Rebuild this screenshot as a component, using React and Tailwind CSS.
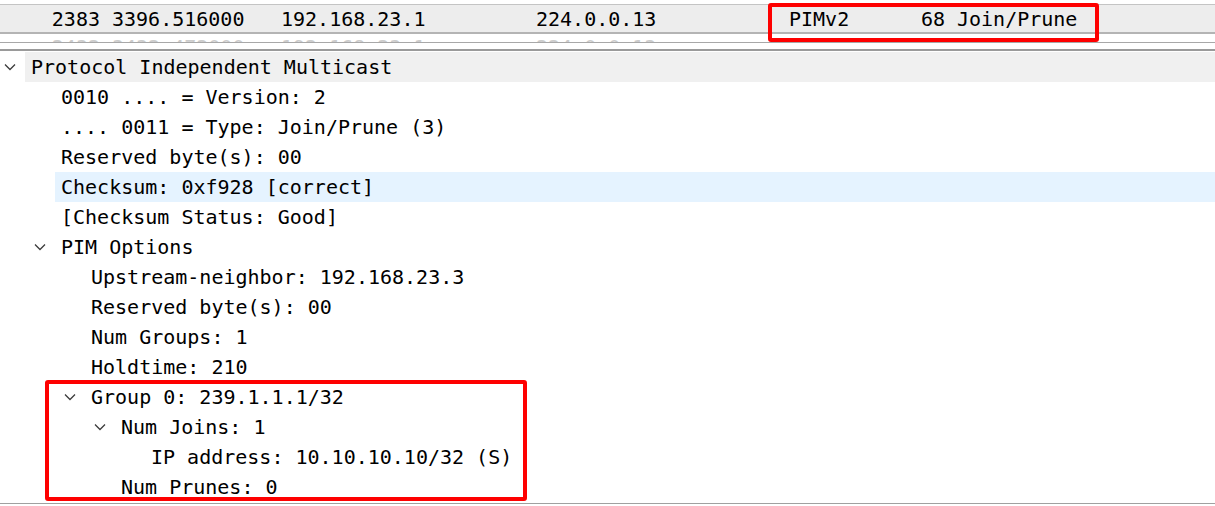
import React from "react";

const MONO = { fontFamily: '"DejaVu Sans Mono", "Liberation Mono", monospace' };

function Chevron() {
  return (
    <svg width="12" height="8" viewBox="0 0 12 8" className="block">
      <polyline points="1,1.5 6,6.5 11,1.5" fill="none" stroke="#3c3c3c" strokeWidth="1.3" />
    </svg>
  );
}

function PacketRow({ no, time, src, dst, proto, len, info, ghost }) {
  return (
    <div className={"flex items-center text-[20px] leading-none whitespace-pre " + (ghost ? "text-[#cccccc]" : "text-black")}>
      <div className="w-[100px] text-right">{no}</div>
      <div className="ml-[12px] w-[169px]">{time}</div>
      <div className="w-[255px]">{src}</div>
      <div className="w-[253px]">{dst}</div>
      <div className="w-[108px]">{proto}</div>
      <div className="w-[48px] text-right">{len}</div>
      <div className="ml-[12px]">{info}</div>
    </div>
  );
}

const rows = [
  { l: 0, t: "Protocol Independent Multicast", c: true, bg: "bg-[#f0f0f0]" },
  { l: 1, t: "0010 .... = Version: 2" },
  { l: 1, t: ".... 0011 = Type: Join/Prune (3)" },
  { l: 1, t: "Reserved byte(s): 00" },
  { l: 1, t: "Checksum: 0xf928 [correct]", bg: "bg-[#e5f3ff]" },
  { l: 1, t: "[Checksum Status: Good]" },
  { l: 1, t: "PIM Options", c: true },
  { l: 2, t: "Upstream-neighbor: 192.168.23.3" },
  { l: 2, t: "Reserved byte(s): 00" },
  { l: 2, t: "Num Groups: 1" },
  { l: 2, t: "Holdtime: 210" },
  { l: 2, t: "Group 0: 239.1.1.1/32", c: true },
  { l: 3, t: "Num Joins: 1", c: true },
  { l: 4, t: "IP address: 10.10.10.10/32 (S)" },
  { l: 3, t: "Num Prunes: 0" },
];

const indentCls = ["w-0", "w-[30px]", "w-[60px]", "w-[90px]", "w-[120px]"];

export default function App() {
  return (
    <div className="w-[1215px] h-[506px] bg-white overflow-hidden" style={MONO}>
      {/* Packet list */}
      <div className="relative">
        <div className="h-[4px] bg-white" />
        <div className="h-px bg-[#c4c4c4]" />
        <div className="h-[27px] bg-[#ededed] flex items-center">
          <PacketRow no="2383" time="3396.516000" src="192.168.23.1" dst="224.0.0.13" proto="PIMv2" len="68" info="Join/Prune" />
        </div>
        <div className="h-[2px] bg-[#b4b4b4]" />
        <div className="h-[8px] overflow-hidden bg-white">
          <div className="pt-[3px]">
            <PacketRow ghost no="2432" time="3432.472000" src="192.168.23.1" dst="224.0.0.13" proto="PIMv2" len="68" info="Join/Prune" />
          </div>
        </div>
        <div className="h-px bg-[#a8a8a8]" />
        <div className="h-[6px] bg-white" />
        <div className="h-[2px] bg-[#9a9a9a]" />
        <div className="absolute left-[768px] top-[3px] w-[331px] h-[39px] border-[4px] border-[#fe0000] rounded-[3px]" />
      </div>

      {/* Details tree */}
      <div className="relative pt-px">
        {rows.map((r, i) => (
          <div key={i} className="flex h-[30px] items-stretch text-[20px] text-black whitespace-pre">
            <div className={indentCls[r.l] + " shrink-0"} />
            <div className="w-[25px] shrink-0 flex items-center pl-[4px]">{r.c ? <Chevron /> : null}</div>
            <div className={"flex-1 flex items-center pl-[6px] " + (r.bg || "")}>
              <span className="leading-none">{r.t}</span>
            </div>
          </div>
        ))}
        <div className="h-px bg-white" />
        <div className="h-px bg-[#a0a0a0]" />
        <div className="absolute left-[45px] top-[329px] w-[482px] h-[121px] border-[4px] border-[#fe0000] rounded-[3px]" />
      </div>
    </div>
  );
}
